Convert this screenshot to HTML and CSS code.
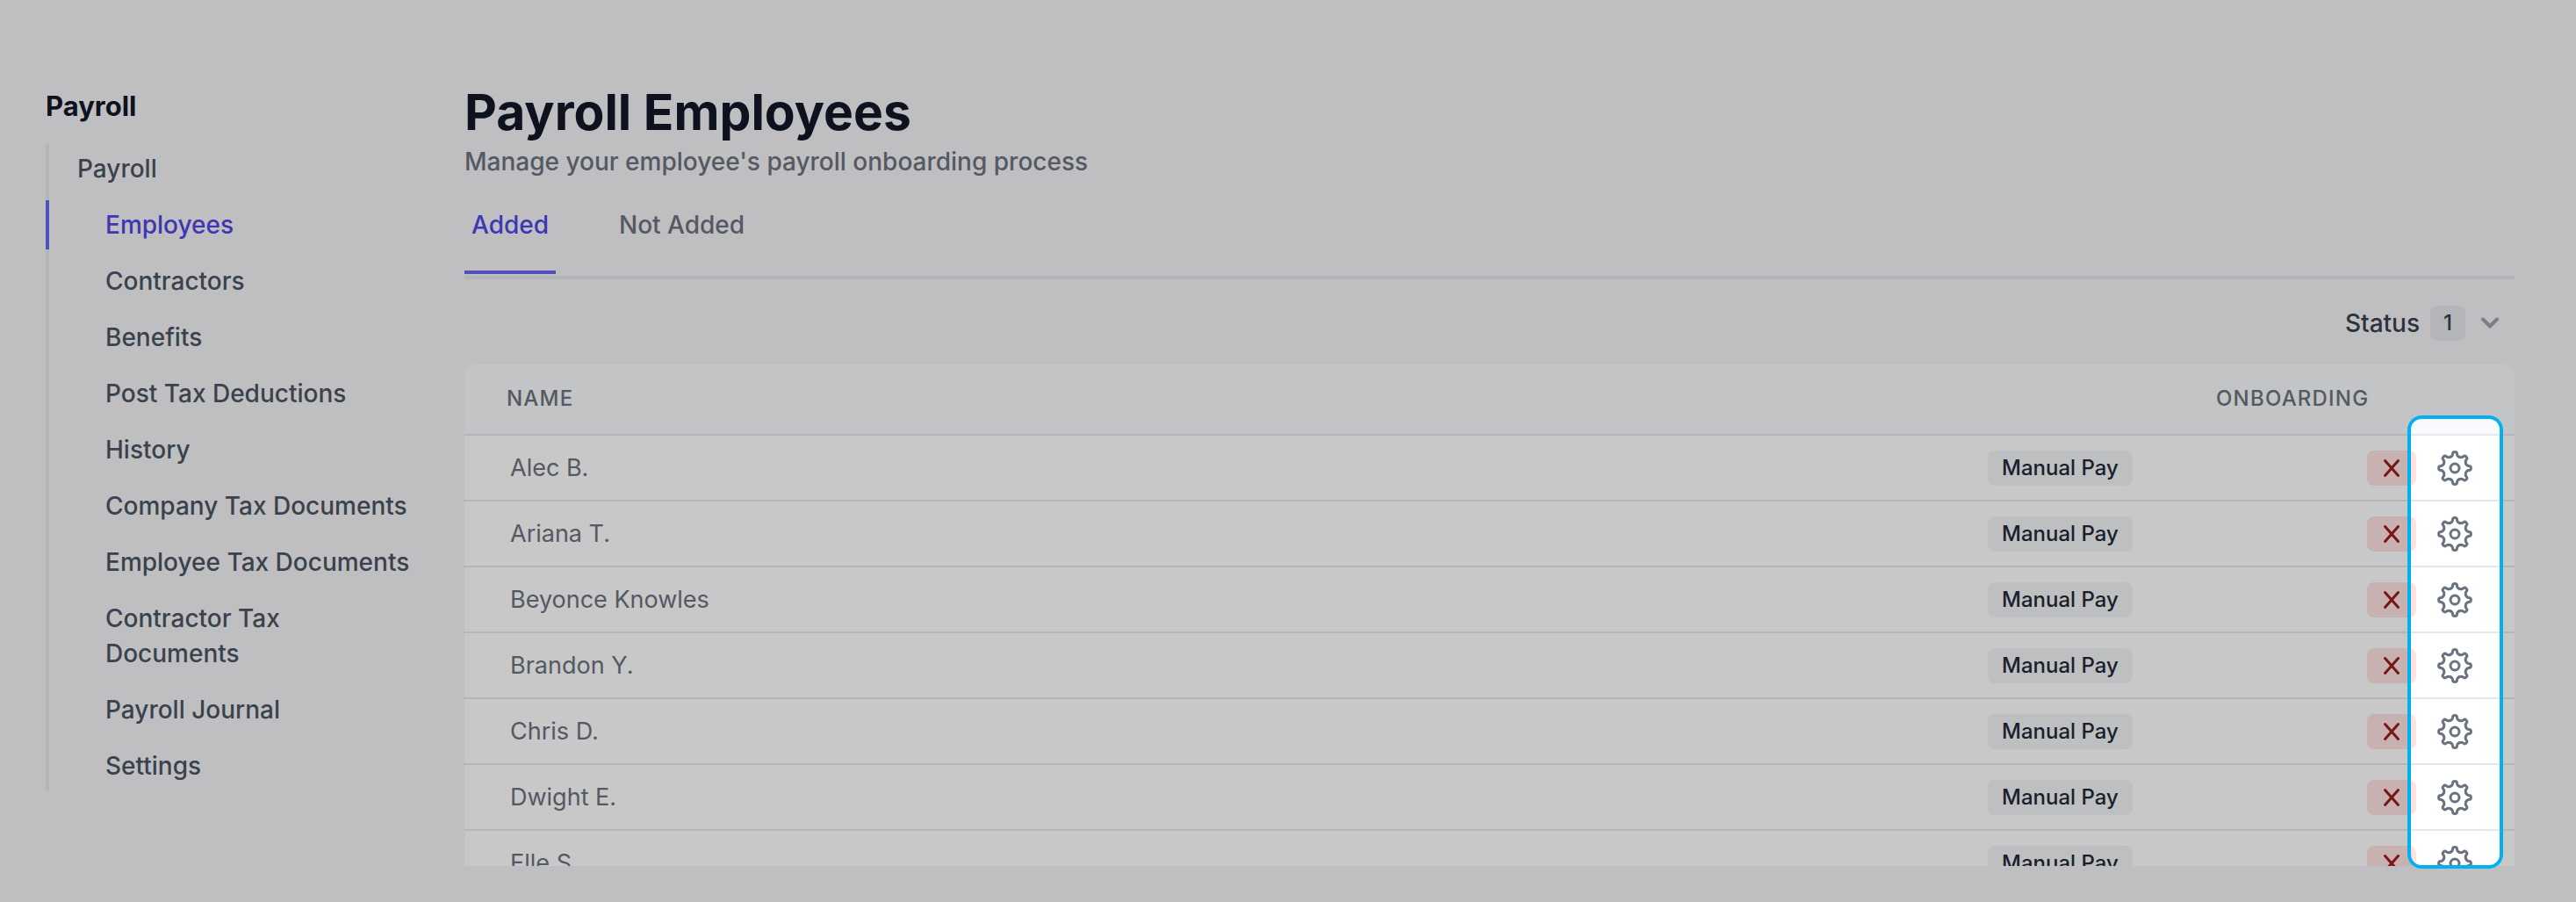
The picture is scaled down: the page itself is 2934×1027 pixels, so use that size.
FILE: index.html
```
<!DOCTYPE html>
<html lang="en">
<head>
	<meta charset="UTF-8">
	<title>Payroll Employees</title>
	<link rel="stylesheet" href="styles.css">
</head>
<body>
	<!-- shared icons -->
	<svg class="sprite" aria-hidden="true">
		<symbol id="gear" viewBox="-20 -20 40 40">
			<g fill="none" stroke="currentColor" stroke-width="3" stroke-linecap="round">
				<path id="tooth" d="M-5.2 -12.6C-3.6 -13.3 -2.6 -14.4 -2.5 -15.9A2.5 2.5 0 0 1 2.5 -15.9C2.6 -14.4 3.6 -13.3 5.2 -12.6"/>
				<use href="#tooth" transform="rotate(45)"/>
				<use href="#tooth" transform="rotate(90)"/>
				<use href="#tooth" transform="rotate(135)"/>
				<use href="#tooth" transform="rotate(180)"/>
				<use href="#tooth" transform="rotate(225)"/>
				<use href="#tooth" transform="rotate(270)"/>
				<use href="#tooth" transform="rotate(315)"/>
				<circle r="5"/>
			</g>
		</symbol>
		<symbol id="cross" viewBox="0 0 20 22">
			<path d="M2.5 2.5L17.5 19.5M17.5 2.5L2.5 19.5" fill="none" stroke="currentColor" stroke-width="3" stroke-linecap="round"/>
		</symbol>
	</svg>
	<div class="page">
		<aside class="sidebar">
			<h2 class="sidebar-title">Payroll</h2>
			<nav class="nav">
				<a class="nav-link parent" href="#">Payroll</a>
				<a class="nav-link active" href="#">Employees</a>
				<a class="nav-link" href="#">Contractors</a>
				<a class="nav-link" href="#">Benefits</a>
				<a class="nav-link" href="#">Post Tax Deductions</a>
				<a class="nav-link" href="#">History</a>
				<a class="nav-link" href="#">Company Tax Documents</a>
				<a class="nav-link" href="#">Employee Tax Documents</a>
				<a class="nav-link" href="#">Contractor Tax Documents</a>
				<a class="nav-link" href="#">Payroll Journal</a>
				<a class="nav-link" href="#">Settings</a>
			</nav>
		</aside>
		<main class="main">
			<h1 class="title">Payroll Employees</h1>
			<p class="subtitle">Manage your employee's payroll onboarding process</p>
			<div class="tabs">
				<a class="tab active" href="#">Added</a>
				<a class="tab" href="#">Not Added</a>
			</div>
			<div class="filters">
				<button class="filter" type="button">
					Status
					<span class="count">1</span>
					<svg class="chevron" viewBox="0 0 20 14" aria-hidden="true"><path d="M2 2.5L10 10.5L18 2.5" fill="none" stroke="currentColor" stroke-width="4" stroke-linecap="round" stroke-linejoin="round"/></svg>
				</button>
			</div>
			<div class="panel">
				<div class="scroll">
					<table class="employees">
						<thead>
							<tr>
								<th class="name">Name</th>
								<th class="pay"></th>
								<th class="onboarding">Onboarding</th>
								<th class="action"></th>
							</tr>
						</thead>
						<tbody>
							<tr>
								<td class="name">Alec B.</td>
								<td class="pay"><span class="badge">Manual Pay</span></td>
								<td class="onboarding"><span class="badge red"><svg class="cross" role="img" aria-label="Incomplete"><use href="#cross"/></svg></span></td>
								<td class="action"><button class="settings" type="button" aria-label="Settings"><svg class="gear"><use href="#gear"/></svg></button></td>
							</tr>
							<tr>
								<td class="name">Ariana T.</td>
								<td class="pay"><span class="badge">Manual Pay</span></td>
								<td class="onboarding"><span class="badge red"><svg class="cross" role="img" aria-label="Incomplete"><use href="#cross"/></svg></span></td>
								<td class="action"><button class="settings" type="button" aria-label="Settings"><svg class="gear"><use href="#gear"/></svg></button></td>
							</tr>
							<tr>
								<td class="name">Beyonce Knowles</td>
								<td class="pay"><span class="badge">Manual Pay</span></td>
								<td class="onboarding"><span class="badge red"><svg class="cross" role="img" aria-label="Incomplete"><use href="#cross"/></svg></span></td>
								<td class="action"><button class="settings" type="button" aria-label="Settings"><svg class="gear"><use href="#gear"/></svg></button></td>
							</tr>
							<tr>
								<td class="name">Brandon Y.</td>
								<td class="pay"><span class="badge">Manual Pay</span></td>
								<td class="onboarding"><span class="badge red"><svg class="cross" role="img" aria-label="Incomplete"><use href="#cross"/></svg></span></td>
								<td class="action"><button class="settings" type="button" aria-label="Settings"><svg class="gear"><use href="#gear"/></svg></button></td>
							</tr>
							<tr>
								<td class="name">Chris D.</td>
								<td class="pay"><span class="badge">Manual Pay</span></td>
								<td class="onboarding"><span class="badge red"><svg class="cross" role="img" aria-label="Incomplete"><use href="#cross"/></svg></span></td>
								<td class="action"><button class="settings" type="button" aria-label="Settings"><svg class="gear"><use href="#gear"/></svg></button></td>
							</tr>
							<tr>
								<td class="name">Dwight E.</td>
								<td class="pay"><span class="badge">Manual Pay</span></td>
								<td class="onboarding"><span class="badge red"><svg class="cross" role="img" aria-label="Incomplete"><use href="#cross"/></svg></span></td>
								<td class="action"><button class="settings" type="button" aria-label="Settings"><svg class="gear"><use href="#gear"/></svg></button></td>
							</tr>
							<tr>
								<td class="name">Elle S.</td>
								<td class="pay"><span class="badge">Manual Pay</span></td>
								<td class="onboarding"><span class="badge red"><svg class="cross" role="img" aria-label="Incomplete"><use href="#cross"/></svg></span></td>
								<td class="action"><button class="settings" type="button" aria-label="Settings"><svg class="gear"><use href="#gear"/></svg></button></td>
							</tr>
						</tbody>
					</table>
				</div>
				<div class="spotlight"></div>
			</div>
		</main>
	</div>
</body>
</html>
```

FILE: styles.css
```
*{
	box-sizing: border-box;
	margin: 0;
	padding: 0;
}
body{
	font-family: Inter, "Liberation Sans", sans-serif;
	font-size: 28px;
	line-height: 40px;
	font-weight: 500;
	color: #4b5563;
	background-color: #f4f4f6;
	overflow: hidden;
}
a{
	color: inherit;
	text-decoration: none;
}
button{
	font: inherit;
	color: inherit;
	border: none;
	background: none;
	cursor: pointer;
}
.sprite{
	position: absolute;
	width: 0;
	height: 0;
}
.page{
	display: flex;
	gap: 56px;
	height: 100vh;
	padding: 92px 70px 41px 52px;
}

/* sidebar */
.sidebar{
	flex: none;
	width: 421px;
}
.sidebar-title{
	margin-bottom: 14px;
	font-size: 31px;
	line-height: 58px;
	font-weight: 700;
	color: #111827;
}
.nav{
	display: flex;
	flex-direction: column;
	gap: 8px;
	box-shadow: inset 4px 0 #e5e7eb;
}
.nav-link{
	padding: 8px 0 8px 64px;
	border-left: 4px solid transparent;
}
.nav-link.parent{
	padding-left: 32px;
}
.nav-link.active{
	color: #4f46e5;
	border-left-color: #6366f1;
}

/* main column */
.main{
	flex: 1;
	min-width: 0;
	display: flex;
	flex-direction: column;
}
.title{
	font-size: 57px;
	line-height: 72px;
	font-weight: 700;
	color: #111827;
}
.subtitle{
	color: #6b7280;
}
.tabs{
	display: flex;
	gap: 64px;
	padding-bottom: 2px;
	border-bottom: 4px solid #e5e7eb;
}
.tab{
	padding: 32px 8px;
	border-bottom: 4px solid transparent;
	color: #6b7280;
}
.tab.active{
	color: #4f46e5;
	border-bottom-color: #6366f1;
}
.filters{
	display: flex;
	justify-content: flex-end;
	padding: 30px 18px 26px;
}
.filter{
	display: flex;
	align-items: center;
	color: #374151;
}
.filter .count{
	width: 40px;
	margin: 0 18px 0 12px;
	border-radius: 8px;
	font-size: 24px;
	text-align: center;
	background-color: #e5e7eb;
}
.filter .chevron{
	width: 20px;
	height: 14px;
	color: #9ca3af;
}

/* table */
.panel{
	position: relative;
	flex: 1;
	min-height: 0;
}
.scroll{
	height: 100%;
	overflow: hidden;
	border-radius: 16px 16px 0 0;
	background-color: #fff;
}
.employees{
	width: 100%;
	border-spacing: 0;
	table-layout: fixed;
}
.employees th{
	height: 82px;
	padding: 0 48px;
	border-bottom: 2px solid #e5e7eb;
	font-size: 24px;
	font-weight: 500;
	letter-spacing: 0.05em;
	text-align: left;
	text-transform: uppercase;
	color: #6b7280;
	background-color: #f9fafb;
}
.employees td{
	height: 75px;
	border-bottom: 2px solid #e5e7eb;
	font-weight: 400;
	color: #6b7280;
}
.employees td.name{
	padding-left: 52px;
	font-size: 27px;
}
.employees .pay{
	width: 260px;
}
.employees td.pay{
	padding-left: 48px;
}
.employees .onboarding{
	width: 276px;
}
.employees .action{
	width: 112px;
}
.employees td.action{
	padding-left: 24px;
}
.badge{
	display: flex;
	width: fit-content;
	padding: 0 16px;
	border-radius: 8px;
	font-size: 24px;
	font-weight: 500;
	color: #1f2937;
	background-color: #f3f4f6;
}
.badge.red{
	align-items: center;
	justify-content: center;
	width: 56px;
	height: 40px;
	margin-left: auto;
	color: #991b1b;
	background-color: #fee2e2;
}
.cross{
	width: 20px;
	height: 22px;
}
.settings{
	display: block;
}
.gear{
	display: block;
	width: 40px;
	height: 40px;
	color: #6b7280;
}

/* dims everything except the settings column */
.spotlight{
	position: absolute;
	top: 59px;
	right: 13px;
	bottom: -3px;
	width: 109px;
	border: 4px solid #00b0f0;
	border-radius: 16px;
	box-shadow: 0 0 0 4000px rgba(0, 0, 0, 0.216);
	pointer-events: none;
}
```
